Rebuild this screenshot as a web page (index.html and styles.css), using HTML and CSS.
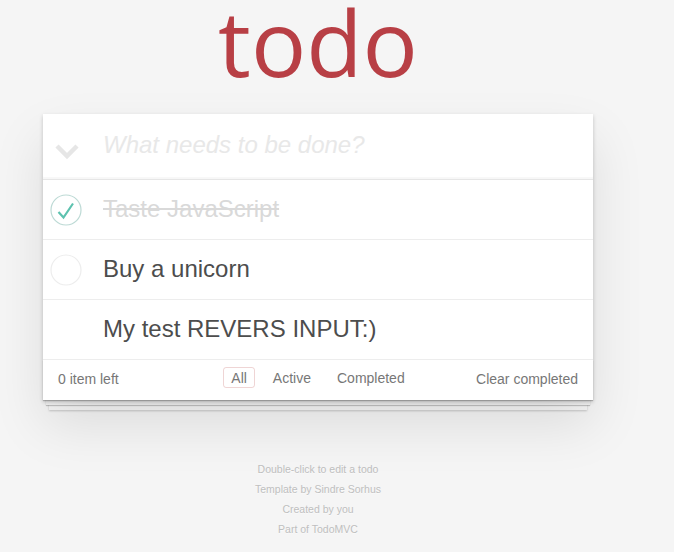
FILE: index.html
```
<!DOCTYPE html>
<html lang="en">
<head>
<meta charset="utf-8">
<title>TodoMVC</title>
<link rel="stylesheet" href="styles.css">
</head>
<body>
<div class="page">
  <h1 class="title">todo</h1>
  <section class="app">
    <header class="new">
      <span class="toggle-all">
        <svg width="24" height="16" viewBox="0 0 24 16"><polyline points="2,2 12,12 22,2" fill="none" stroke="#e6e6e6" stroke-width="4.5"/></svg>
      </span>
      <span class="placeholder">What needs to be done?</span>
    </header>
    <ul class="list">
      <li class="item done">
        <span class="toggle">
          <svg width="32" height="32" viewBox="0 0 32 32"><circle cx="16" cy="16" r="15" fill="none" stroke="#bddad5" stroke-width="1.2"/><polyline points="8.5,18 13.5,23.5 23,9.5" fill="none" stroke="#5dc2af" stroke-width="2.2"/></svg>
        </span>
        <span class="label">Taste JavaScript</span>
      </li>
      <li class="item">
        <span class="toggle">
          <svg width="32" height="32" viewBox="0 0 32 32"><circle cx="16" cy="16" r="15" fill="none" stroke="#ededed" stroke-width="1.2"/></svg>
        </span>
        <span class="label">Buy a unicorn</span>
      </li>
      <li class="item">
        <span class="toggle empty"></span>
        <span class="label">My test REVERS INPUT:)</span>
      </li>
    </ul>
    <footer class="footer">
      <span class="count">0 item left</span>
      <ul class="filters">
        <li><a class="selected">All</a></li>
        <li><a>Active</a></li>
        <li><a>Completed</a></li>
      </ul>
      <span class="clear">Clear completed</span>
    </footer>
  </section>
  <footer class="info">
    <p>Double-click to edit a todo</p>
    <p>Template by Sindre Sorhus</p>
    <p>Created by you</p>
    <p>Part of TodoMVC</p>
  </footer>
</div>
</body>
</html>
```
FILE: styles.css
```
html, body {
  margin: 0;
  padding: 0;
}
body {
  background: #f5f5f5;
  color: #4d4d4d;
  font-family: "Liberation Sans", Arial, sans-serif;
  font-weight: 300;
}
.page {
  width: 550px;
  margin-left: 43px;
}
.title {
  margin: 0;
  height: 114px;
  line-height: 83px;
  font-family: "Open Sans", "Noto Sans", sans-serif;
  font-size: 92px;
  font-weight: 400;
  color: #b83f45;
  text-align: center;
}
.app {
  position: relative;
  background: #fff;
  box-shadow: 0 2px 4px 0 rgba(0,0,0,0.2), 0 25px 50px 0 rgba(0,0,0,0.1);
}
.new {
  display: flex;
  align-items: center;
  height: 66px;
  box-sizing: border-box;
  box-shadow: inset 0 -2px 1px rgba(0,0,0,0.03);
  border-bottom: 1px solid #e6e6e6;
}
.toggle-all {
  width: 60px;
  display: flex;
  padding-top: 10px;
  padding-left: 12px;
  box-sizing: border-box;
}
.placeholder {
  font-size: 24px;
  font-style: italic;
  color: #e8e8e8;
  margin-top: -4px;
}
.list {
  list-style: none;
  margin: 0;
  padding: 0;
}
.item {
  display: flex;
  align-items: center;
  height: 60px;
  box-sizing: border-box;
  border-bottom: 1px solid #ededed;
  font-size: 24px;
}
.toggle {
  width: 60px;
  display: flex;
  padding-left: 7px;
  box-sizing: border-box;
}
.label {
  line-height: 1.2;
  color: #4d4d4d;
}
.done .label {
  color: #d9d9d9;
  text-decoration: line-through;
}
.footer {
  position: relative;
  display: grid;
  grid-template-columns: 1fr auto 1fr;
  align-items: center;
  height: 40px;
  padding: 0 15px;
  color: #777;
  font-size: 14px;
}
.footer::before {
  content: "";
  position: absolute;
  right: 0;
  bottom: 0;
  left: 0;
  height: 40px;
  z-index: -1;
  box-shadow: 0 1px 1px rgba(0,0,0,0.2), 0 8px 0 -3px #f6f6f6, 0 9px 1px -3px rgba(0,0,0,0.2), 0 16px 0 -6px #f6f6f6, 0 17px 2px -6px rgba(0,0,0,0.2);
}
.count {
  margin-top: -2px;
}
.filters {
  list-style: none;
  margin: -5px 0 0;
  padding: 0;
  display: flex;
  gap: 10px;
}
.filters a {
  display: block;
  padding: 2px 7px 1px;
  border: 1px solid transparent;
  border-radius: 3px;
  line-height: 16px;
}
.filters a.selected {
  border-color: rgba(175,47,47,0.2);
}
.clear {
  text-align: right;
  margin-top: -2px;
}
.info {
  margin-top: 64px;
  color: #bfbfbf;
  font-size: 10.5px;
  text-align: center;
  text-shadow: 0 1px 0 rgba(255,255,255,0.5);
}
.info p {
  margin: 0 0 10px;
  line-height: 10px;
}
```
